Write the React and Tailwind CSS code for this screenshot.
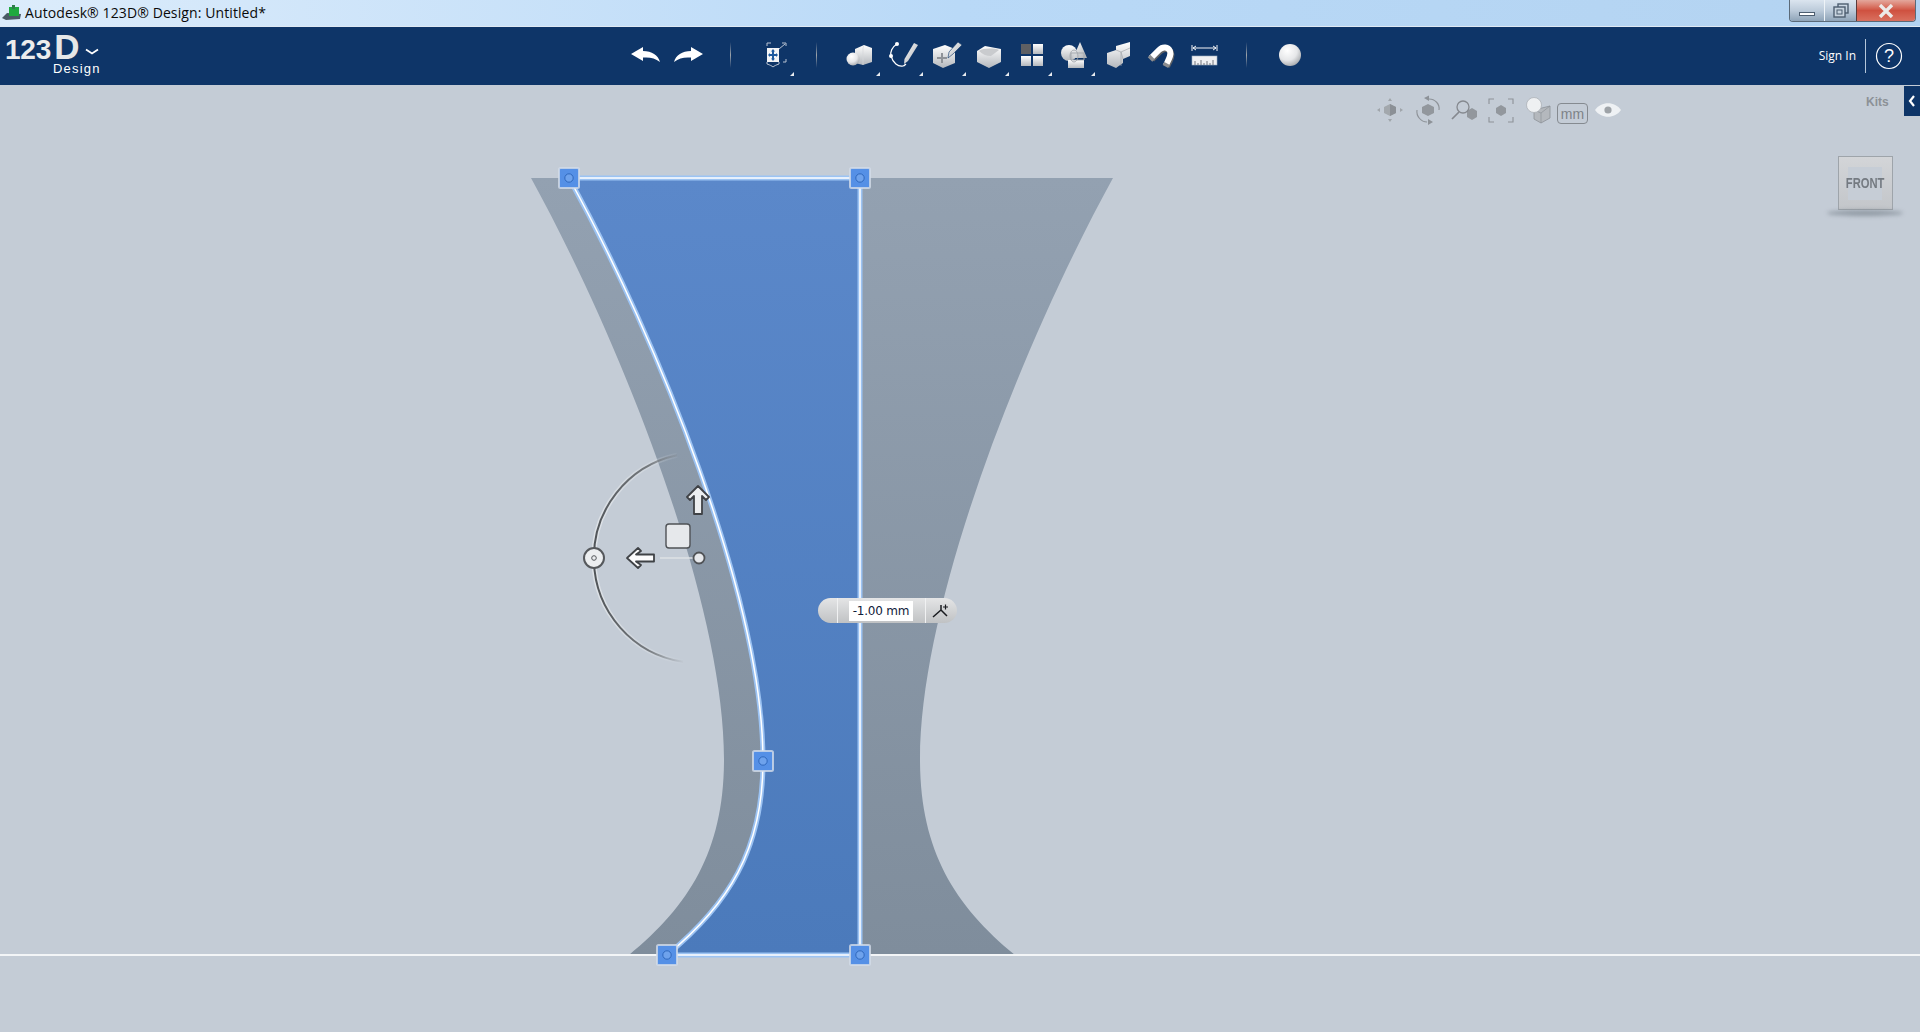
import React from "react";

const Grad = () => (
  <svg width="0" height="0" className="absolute">
    <defs>
      <linearGradient id="wg" x1="0" y1="0" x2="0" y2="1"><stop offset="0" stopColor="#ffffff" /><stop offset="1" stopColor="#b4b8bd" /></linearGradient>
      <linearGradient id="wd" x1="0" y1="0" x2="1" y2="1"><stop offset="0" stopColor="#ffffff" /><stop offset="1" stopColor="#a9adb2" /></linearGradient>
      <radialGradient id="ball" cx="0.38" cy="0.3" r="0.8"><stop offset="0" stopColor="#ffffff" /><stop offset="0.55" stopColor="#e6e7e9" /><stop offset="1" stopColor="#9a9da1" /></radialGradient>
      <linearGradient id="gray" x1="0" y1="178" x2="0" y2="955" gradientUnits="userSpaceOnUse"><stop offset="0" stopColor="#93a1b1" /><stop offset="1" stopColor="#7f8d9c" /></linearGradient>
      <linearGradient id="blue" x1="0" y1="178" x2="0" y2="955" gradientUnits="userSpaceOnUse"><stop offset="0" stopColor="#5b88ca" /><stop offset="1" stopColor="#4b7abb" /></linearGradient>
      <linearGradient id="arcG" x1="594" y1="0" x2="685" y2="0" gradientUnits="userSpaceOnUse"><stop offset="0" stopColor="#505458" /><stop offset="0.6" stopColor="#65696d" stopOpacity="0.85" /><stop offset="1" stopColor="#6d7175" stopOpacity="0" /></linearGradient>
      <linearGradient id="arcH" x1="594" y1="0" x2="685" y2="0" gradientUnits="userSpaceOnUse"><stop offset="0" stopColor="#e9ecef" stopOpacity="0.7" /><stop offset="1" stopColor="#e9ecef" stopOpacity="0" /></linearGradient>
    </defs>
  </svg>
);

const Icon = ({ children, corner }) => (
  <div className="relative w-[43px] h-[58px] shrink-0 flex items-center justify-center">
    <svg width="34" height="34" viewBox="0 0 34 34" className="-mt-[2px]">{children}</svg>
    {corner && <span className="absolute right-[1px] bottom-[9px] w-0 h-0 border-l-[4px] border-l-transparent border-b-[4px] border-b-[#e8ebef]" />}
  </div>
);

const Sep = () => (
  <div className="w-[43px] h-[58px] shrink-0 flex items-center justify-center">
    <div className="w-[1px] h-[26px] -mt-[3px] bg-gradient-to-b from-[#0e3568] via-[#9ea5ab] to-[#0e3568]" />
  </div>
);

const Toolbar = () => (
  <div className="flex ml-[522px]">
    <Icon>
      <path d="M3 16 L15 9 L15 13 C24 13 30 17 32 24 C27 20 22 19 15 19.5 L15 23 Z" fill="#fff" />
    </Icon>
    <Icon>
      <path d="M32 16 L20 9 L20 13 C11 13 5 17 3 24 C8 20 13 19 20 19.5 L20 23 Z" fill="#fff" />
    </Icon>
    <Sep />
    <Icon corner>
      <g fill="none" stroke="#b7c2d1" strokeWidth="1">
        <path d="M10 8 V5 H14 M25 5 H29 V8 M29 21 V24 H26 M10 24 V26 C13 27 15 28 16 29 C17 28 19 27 22 26 V24" />
        <path d="M22 11 L28 6" />
      </g>
      <rect x="10" y="10" width="12" height="14" fill="#f3f4f6" />
      <path d="M16 11 L18 13.5 H17 V16 H19 V15 L21 17 L19 19 V18 H17 V20.5 H18 L16 23 L14 20.5 H15 V18 H13 V19 L11 17 L13 15 V16 H15 V13.5 H14 Z" fill="#1f5a9e" />
    </Icon>
    <Sep />
    <Icon corner>
      <path d="M12 11 L21 7 L29 10 V24 L20 27 L12 25 Z" fill="url(#wg)" />
      <path d="M21 7 L20 10 V27" stroke="#d5d7da" fill="none" strokeWidth="0.7" />
      <circle cx="10" cy="21" r="6.5" fill="url(#ball)" />
    </Icon>
    <Icon corner>
      <path d="M11 6 C6 9 4 14 5 18 C7 25 12 29 17 28 C18 28 19 27 20 26" fill="none" stroke="#fff" strokeWidth="1.2" />
      <circle cx="11" cy="6" r="2" fill="#fff" /><circle cx="5" cy="18" r="2" fill="#fff" />
      <path d="M28 5 L32 7 L22 23 L18 26 L18.5 21 Z" fill="url(#wd)" />
    </Icon>
    <Icon corner>
      <path d="M4 11 L16 7 L26 11 V25 L14 30 L4 25 Z" fill="url(#wg)" />
      <path d="M8 20 H18 M13 15 V25" stroke="#8f9398" strokeWidth="2" />
      <path d="M29 4 L33 7 L24 16 L19 20 L20 14 Z" fill="url(#wd)" stroke="#0e3568" strokeWidth="0.6" />
    </Icon>
    <Icon corner>
      <path d="M5 13 L13 8 L29 11 V24 L17 30 L5 24 Z" fill="url(#wg)" />
      <path d="M7 13 C11 10 22 10 27 12 L19 18 C14 18 10 16 7 13 Z" fill="#c9cbce" />
    </Icon>
    <Icon corner>
      <rect x="6" y="6" width="10" height="10" fill="#5f6063" />
      <rect x="18" y="6" width="10" height="10" fill="url(#wg)" />
      <rect x="6" y="18" width="10" height="10" fill="url(#wg)" />
      <rect x="18" y="18" width="10" height="10" fill="url(#wg)" />
    </Icon>
    <Icon corner>
      <circle cx="11" cy="15" r="8" fill="url(#wg)" />
      <path d="M22 4 L29 20 H15 Z" fill="url(#wd)" />
      <rect x="10" y="22" width="16" height="8" fill="url(#wg)" />
      <path d="M13 15 H26 V22 H13 Z" fill="none" stroke="#a2a6ab" strokeWidth="0.9" />
      <ellipse cx="16" cy="18" rx="4" ry="6" fill="none" stroke="#a2a6ab" strokeWidth="0.9" />
    </Icon>
    <Icon>
      <path d="M15 8 L29 4 V18 L22 21 V25 L15 30 L6 26 V15 L15 12 Z" fill="url(#wg)" />
      <path d="M15 12 L20 14 V28 M22 21 L20 14 L29 10" stroke="#a5a8ac" fill="none" strokeWidth="0.7" />
    </Icon>
    <Icon>
      <path d="M7 20 L15 12 C19 8 24 9 26 13 C27.5 17 25 21 22 27" fill="none" stroke="#5f6266" strokeWidth="6" transform="translate(1 1.5)" />
      <path d="M7 20 L15 12 C19 8 24 9 26 13 C27.5 17 25 21 22 27" fill="none" stroke="#fff" strokeWidth="6" />
      <path d="M5 18 L9.5 22.5" stroke="#8b8d90" strokeWidth="3.5" />
      <path d="M19.5 25.5 L25 28.5" stroke="#8b8d90" strokeWidth="3.5" />
    </Icon>
    <Icon>
      <path d="M5 7 V13 M30 7 V13 M6 10 H29 M6 10 L9 8 M6 10 L9 12 M29 10 L26 8 M29 10 L26 12" stroke="#f4f5f7" strokeWidth="1" fill="none" />
      <rect x="5" y="18" width="25" height="9" fill="#f0f1f3" stroke="#9fb0c4" strokeWidth="0.6" />
      <path d="M8 27 V23 M11 27 V25 M14 27 V22 M17 27 V25 M20 27 V23 M23 27 V25 M26 27 V22" stroke="#646a72" strokeWidth="0.9" />
    </Icon>
    <Sep />
    <Icon>
      <circle cx="17" cy="17" r="11" fill="url(#ball)" />
    </Icon>
  </div>
);

const Ctl = ({ w = 30, children }) => (
  <svg width={w} height="30" viewBox={`0 0 ${w} 30`} className="shrink-0">{children}</svg>
);

const ViewControls = () => (
  <div className="absolute left-[1375px] top-[10px] flex items-start">
    <Ctl>
      <path d="M15 9 L21 12 V18 L15 21 L9 18 V12 Z" fill="#a3a8ad" /><path d="M15 9 L21 12 V18 L15 21 Z" fill="#8b9096" />
      <path d="M15 3 L13 6 H17 Z M15 27 L13 24 H17 Z M2 15 L5 13 V17 Z M28 15 L25 13 V17 Z" fill="#a0a5ab" />
    </Ctl>
    <div className="w-[8px] shrink-0" />
    <Ctl>
      <path d="M15 9 L21 12 V18 L15 21 L9 18 V12 Z" fill="#92979d" />
      <path d="M16 4 C22 4 27 9 26 15 M14 27 C8 27 3 21 4 15" fill="none" stroke="#8d9298" strokeWidth="1.1" />
      <path d="M11 3 L16 0.5 V6 Z M20 27 L15 24 V30 Z" fill="#8d9298" />
    </Ctl>
    <div className="w-[5px] shrink-0" />
    <Ctl>
      <path d="M24 13 L29 16 V22 L24 25 L19 22 V16 Z" fill="#92979d" />
      <circle cx="15" cy="12" r="6" fill="none" stroke="#85898f" strokeWidth="1.3" />
      <path d="M11 17 L4 24" stroke="#85898f" strokeWidth="1.7" />
    </Ctl>
    <div className="w-[8px] shrink-0" />
    <Ctl>
      <path d="M3 9 V4 H8 M22 4 H27 V9 M3 22 V27 H8 M22 27 H27 V22" fill="none" stroke="#8d9298" strokeWidth="1.1" />
      <path d="M15 10 L20 13 V18 L15 21 L10 18 V13 Z" fill="#92979d" />
    </Ctl>
    <div className="w-[7px] shrink-0" />
    <Ctl>
      <path d="M11 15 L27 11 V23 L18 28 L11 24 Z" fill="#b4b8bd" stroke="#8d9298" strokeWidth="0.8" />
      <path d="M18 18 L27 11 M18 18 V28 M18 18 L11 15" stroke="#8d9298" strokeWidth="0.7" fill="none" />
      <circle cx="11" cy="10" r="7.5" fill="#eef0f2" stroke="#a8acb1" strokeWidth="0.7" />
    </Ctl>
    <div className="w-[4px] shrink-0" />
    <div className="mt-[8px] w-[31px] h-[21px] shrink-0 rounded-[4px] border border-[#858a90] flex items-center justify-center text-[#7e8388] text-[14px] leading-none font-['Liberation_Sans',sans-serif]">mm</div>
    <div className="w-[5px] shrink-0" />
    <Ctl>
      <path d="M2 15 C8 6 22 6 28 15 C22 24 8 24 2 15 Z" fill="#eef1f4" />
      <circle cx="15" cy="15" r="3.6" fill="#9ea3a8" />
    </Ctl>
  </div>
);

const Cube = () => (
  <div className="absolute left-[1825px] top-[71px] w-[80px] flex flex-col items-center">
    <div className="w-[55px] h-[54px] border border-[#9ea4aa] bg-gradient-to-b from-[#d3d5d8] to-[#c3c6ca] flex items-center justify-center">
      <div className="w-[34px] h-[33px] bg-[#c6cdd6] flex items-center justify-center">
        <span className="shrink-0 text-[#747a81] text-[14px] font-bold leading-none font-['Liberation_Sans',sans-serif] scale-x-[0.8]">FRONT</span>
      </div>
    </div>
    <div className="w-[76px] h-[6px] rounded-[50%] bg-[#7d8791] opacity-70 blur-[2px]" />
  </div>
);

const Handle = ({ x, y }) => (
  <g>
    <rect x={x - 10} y={y - 10} width="20" height="20" rx="1.5" fill="#5590e6" stroke="#d3dce9" strokeOpacity="0.8" strokeWidth="2" />
    <circle cx={x} cy={y} r="4.2" fill="#6ea2ec" stroke="#2f68bd" strokeWidth="1" />
  </g>
);

const grayPath = "M531 178 H1113 C1024 340 920 600 920 759 C920 850 954 905 1015 955 H629 C690 905 724 850 724 759 C724 600 620 340 531 178 Z";
const bluePath = "M569 178 H860 V955 H667 C728 905 763 850 763 761 C763 600 658 340 569 178 Z";

const Model = () => (
  <svg className="absolute inset-0" width="1920" height="947" viewBox="0 85 1920 947">
    <path d={grayPath} fill="url(#gray)" />
    <path d={bluePath} fill="url(#blue)" />
    <rect x="0" y="954" width="1920" height="2" fill="#f3f5f7" />
    <path d={bluePath} fill="none" stroke="#9cc3f3" strokeWidth="5" />
    <path d={bluePath} fill="none" stroke="#ffffff" strokeWidth="1.5" />
    <Handle x={569} y={178} />
    <Handle x={860} y={178} />
    <Handle x={763} y={761} />
    <Handle x={667} y={955} />
    <Handle x={860} y={955} />

    {/* gizmo */}
    <path d="M677 455.3 A105 105 0 0 0 683 661.8" fill="none" stroke="url(#arcH)" strokeWidth="5" />
    <path d="M677 455.3 A105 105 0 0 0 683 661.8" fill="none" stroke="url(#arcG)" strokeWidth="2" />
    <rect x="660" y="557" width="34" height="2" fill="#dfe2e6" opacity="0.7" />
    <circle cx="594" cy="558" r="10" fill="#eceef0" stroke="#55585c" strokeWidth="2" />
    <circle cx="594" cy="558" r="2.3" fill="none" stroke="#55585c" />
    <circle cx="699" cy="558" r="5.5" fill="#e6e8eb" stroke="#4f5256" strokeWidth="1.8" />
    <rect x="666" y="524" width="24" height="24" rx="3" fill="#e6e8eb" stroke="#4f5256" strokeWidth="1.4" />
    <path d="M627 558 L638 548 L641 551 L636 554.5 H654 V561.5 H636 L641 565 L638 568 Z" fill="#fbfbfc" stroke="#3f4246" strokeWidth="1.8" strokeLinejoin="round" />
    <path d="M698 486 L709 497 L706 500 L702 496 V514 H694 V496 L690 500 L687 497 Z" fill="#eceef0" stroke="#3f4246" strokeWidth="1.8" strokeLinejoin="round" />
  </svg>
);

const Pill = () => (
  <div className="absolute left-[818px] top-[513px] w-[139px] h-[25px] rounded-full bg-gradient-to-b from-[#e4e5e6] to-[#c0c2c4] flex items-center">
    <div className="w-[20px] h-full border-r border-[#f0f1f2] shrink-0" />
    <div className="ml-[11px] w-[64px] h-[20px] bg-white flex items-center justify-center text-[12px] leading-none text-[#10203a] font-['DejaVu_Sans',sans-serif] tracking-[-0.2px] whitespace-nowrap">-1.00 mm</div>
    <div className="ml-[12px] h-full border-l border-[#f0f1f2] flex-1 flex items-center justify-center">
      <svg width="18" height="16" viewBox="0 0 18 16" className="-ml-[2px]">
        <path d="M1 14 L9 7 L15 13 M9 7 V2" fill="none" stroke="#1a1c20" strokeWidth="1.5" />
        <path d="M11 4 H16 M13.5 1.5 V6.5" stroke="#1a1c20" strokeWidth="1.2" />
      </svg>
    </div>
  </div>
);

export default function App() {
  return (
    <div className="w-[1920px] h-[1032px] overflow-hidden flex flex-col bg-[#c4ccd6] relative">
      <Grad />
      {/* title bar */}
      <div className="h-[27px] shrink-0 relative flex items-center bg-gradient-to-r from-[#dcecfb] via-[#b9d9f7] to-[#b3d3f1] border-b border-[#dfe9f3]">
        <svg width="22" height="16" viewBox="0 0 22 16" className="ml-[1px] -mt-[1px] shrink-0">
          <path d="M1 13 L6 8 L20 9 L19 14 L5 15 Z" fill="#4a5a66" />
          <path d="M8 2 H18 V11 H8 Z" fill="#1fa93f" />
          <path d="M11 0 H14 V4 H11 Z" fill="#2f7d4a" />
        </svg>
        <span className="ml-[2px] -mt-[1px] text-[14px] leading-none text-[#0a0a0a] font-['Open_Sans',sans-serif] whitespace-nowrap tracking-[0.1px]">Autodesk® 123D® Design: Untitled*</span>
        <div className="absolute right-[4px] top-0 h-[22px] flex rounded-b-[4px] border border-t-0 border-[#5b6a78] overflow-hidden">
          <div className="w-[35px] bg-gradient-to-b from-[#dbe5ef] via-[#bccbda] to-[#8fa4b8] border-r border-[#eef3f7] flex items-center justify-center">
            <div className="w-[16px] h-[4px] mt-[6px] bg-white border border-[#4d5e70]" />
          </div>
          <div className="w-[32px] bg-gradient-to-b from-[#dbe5ef] via-[#bccbda] to-[#8fa4b8] border-r border-[#5b3a3a] flex items-center justify-center">
            <svg width="18" height="16" viewBox="0 0 18 16">
              <rect x="6" y="1" width="10" height="9" fill="none" stroke="#4d5e70" strokeWidth="1.4" />
              <rect x="2" y="4" width="11" height="10" fill="#c8d4df" stroke="#4d5e70" strokeWidth="1.4" />
              <rect x="5" y="7" width="5" height="4" fill="#c8d4df" stroke="#4d5e70" />
            </svg>
          </div>
          <div className="w-[58px] bg-gradient-to-b from-[#e3a79c] via-[#cf5140] to-[#d9705f] flex items-center justify-center">
            <svg width="16" height="14" viewBox="0 0 16 14"><path d="M2 1 L14 13 M14 1 L2 13" stroke="#eceae8" strokeWidth="3.4" /></svg>
          </div>
        </div>
      </div>

      {/* ribbon */}
      <div className="h-[58px] shrink-0 bg-[#0e3568] flex items-start relative">
        <div className="w-[101px] h-full shrink-0 relative">
          <div className="absolute left-[5px] top-[5px] flex items-baseline gap-[3px] font-bold font-['Liberation_Sans',sans-serif] whitespace-nowrap">
            <span className="text-[28px] leading-[22px] tracking-[-0.2px] text-[#eceded]">123</span>
            <span className="text-[35px] leading-[30px] text-[#e6e7e8]">D</span>
          </div>
          <span className="absolute left-[53px] top-[35px] text-[13px] leading-[14px] tracking-[1.2px] text-white font-['Liberation_Sans',sans-serif]">Design</span>
          <svg width="16" height="8" viewBox="0 0 16 8" className="absolute left-[84px] top-[21px]"><path d="M2 1.5 L8 5.5 L14 1.5" fill="none" stroke="#fff" strokeWidth="1.8" /></svg>
        </div>
        <Toolbar />
        <div className="absolute right-[17px] top-[12px] flex items-center h-[34px]">
          <span className="text-[12px] leading-none text-white font-['Open_Sans',sans-serif] whitespace-nowrap">Sign In</span>
          <div className="w-[1px] h-[34px] bg-[#b4c6da] ml-[9px]" />
          <svg width="28" height="28" viewBox="0 0 28 28" className="ml-[9px]">
            <circle cx="14" cy="14" r="12.5" fill="none" stroke="#fff" strokeWidth="1.2" />
            <text x="14" y="20" textAnchor="middle" fontSize="18" fill="#fff" fontFamily="Liberation Sans, sans-serif">?</text>
          </svg>
        </div>
      </div>

      {/* viewport */}
      <div className="flex-1 relative">
        <Model />
        <Pill />
        <ViewControls />
        <Cube />
        <span className="absolute left-[1866px] top-[10px] text-[12px] leading-[14px] font-bold text-[#8c9196] font-['Liberation_Sans',sans-serif]">Kits</span>
        <div className="absolute right-0 top-[1px] w-[16px] h-[30px] bg-[#0e3568] flex items-center justify-center">
          <svg width="8" height="12" viewBox="0 0 8 12"><path d="M6 1 L2 6 L6 11" fill="none" stroke="#fff" strokeWidth="2.2" /></svg>
        </div>
      </div>
    </div>
  );
}
